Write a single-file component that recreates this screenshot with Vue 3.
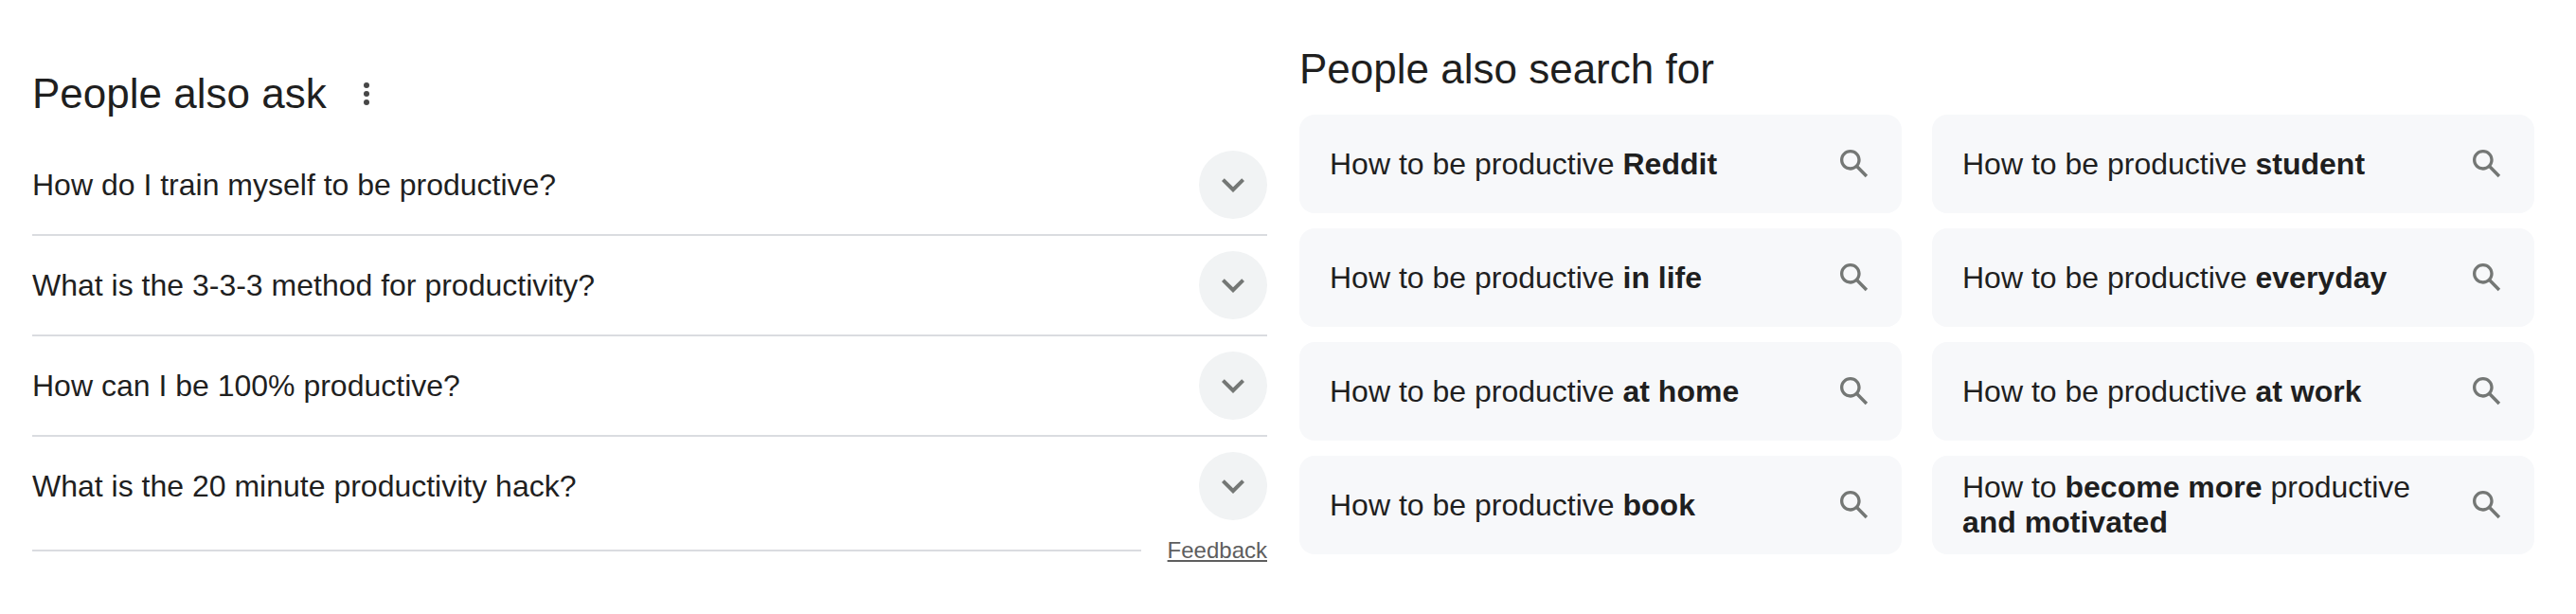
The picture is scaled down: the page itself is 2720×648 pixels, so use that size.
<script setup>
const questions = [
  'How do I train myself to be productive?',
  'What is the 3-3-3 method for productivity?',
  'How can I be 100% productive?',
  'What is the 20 minute productivity hack?',
]

const base = 'How to be productive '
const searches = [
  [{ t: base }, { t: 'Reddit', b: true }],
  [{ t: base }, { t: 'student', b: true }],
  [{ t: base }, { t: 'in life', b: true }],
  [{ t: base }, { t: 'everyday', b: true }],
  [{ t: base }, { t: 'at home', b: true }],
  [{ t: base }, { t: 'at work', b: true }],
  [{ t: base }, { t: 'book', b: true }],
  [{ t: 'How to ' }, { t: 'become more', b: true }, { t: ' productive ' }, { t: 'and motivated', b: true }],
]
</script>

<template>
  <main class="page">
    <section class="ask">
      <header class="ask-head">
        <h2 class="title">People also ask</h2>
        <svg class="dots" viewBox="0 0 24 24">
          <circle cx="12" cy="6" r="2" />
          <circle cx="12" cy="12" r="2" />
          <circle cx="12" cy="18" r="2" />
        </svg>
      </header>
      <ul class="questions">
        <li v-for="q in questions" :key="q" class="question">
          <span>{{ q }}</span>
          <span class="toggle">
            <svg viewBox="0 0 24 24"><path d="M16.59 8.59L12 13.17 7.41 8.59 6 10l6 6 6-6z" /></svg>
          </span>
        </li>
      </ul>
      <footer class="ask-foot">
        <span class="rule"></span>
        <a class="feedback">Feedback</a>
      </footer>
    </section>

    <section class="related">
      <h2 class="title">People also search for</h2>
      <div class="cards">
        <a v-for="(s, i) in searches" :key="i" class="card">
          <span class="label"><template v-for="(p, j) in s" :key="j"><b v-if="p.b">{{ p.t }}</b><template v-else>{{ p.t }}</template></template></span>
          <svg class="glass" viewBox="0 0 24 24">
            <path d="M20.49 19l-5.73-5.73C15.53 12.2 16 10.91 16 9.5 16 5.91 13.09 3 9.5 3S3 5.91 3 9.5 5.91 16 9.5 16c1.41 0 2.7-.47 3.77-1.24L19 20.49 20.49 19zM5 9.5C5 7.01 7.01 5 9.5 5S14 7.01 14 9.5 11.99 14 9.5 14 5 11.99 5 9.5z" />
          </svg>
        </a>
      </div>
    </section>
  </main>
</template>

<style>
body {
  background: #fff;
}
</style>

<style scoped>
.page {
  box-sizing: border-box;
  width: 2720px;
  height: 648px;
  padding: 0 44px 0 34px;
  display: flex;
  gap: 34px;
  overflow: hidden;
  background: #fff;
  color: #1f1f1f;
  font-family: "Liberation Sans", Arial, sans-serif;
  font-size: 32px;
  line-height: 37px;
}
.ask {
  width: 1304px;
  padding-top: 73px;
}
.title {
  margin: 0;
  font-size: 44px;
  font-weight: 400;
  line-height: 51px;
  white-space: nowrap;
}
.ask-head {
  display: flex;
  align-items: flex-start;
  height: 52px;
  margin-bottom: 18px;
}
.dots {
  width: 36px;
  height: 36px;
  margin: 8px 0 0 24px;
  fill: #474747;
}
.questions {
  list-style: none;
  margin: 0;
  padding: 0;
}
.question {
  box-sizing: border-box;
  height: 106px;
  display: flex;
  align-items: center;
  justify-content: space-between;
  border-bottom: 2px solid #dadce0;
}
.question:last-child {
  border-bottom-color: transparent;
}
.toggle {
  width: 72px;
  height: 72px;
  border-radius: 50%;
  background: #f1f3f4;
  display: flex;
  align-items: center;
  justify-content: center;
}
.toggle svg {
  width: 48px;
  height: 48px;
  fill: #747775;
}
.ask-foot {
  display: flex;
  align-items: center;
  gap: 28px;
}
.rule {
  flex: 1;
  height: 2px;
  background: #dadce0;
}
.feedback {
  margin-bottom: 1px;
  font-size: 24px;
  line-height: 27px;
  color: #5e5e5e;
  text-decoration: underline;
  text-decoration-thickness: 2px;
  text-underline-offset: 2px;
}
.related {
  width: 1304px;
  padding-top: 47px;
}
.cards {
  display: grid;
  grid-template-columns: 636px 636px;
  grid-auto-rows: 104px;
  gap: 16px 32px;
  margin-top: 23px;
}
.card {
  box-sizing: border-box;
  padding: 0 30px 0 32px;
  display: flex;
  align-items: center;
  justify-content: space-between;
  border-radius: 16px;
  background: #f7f8fa;
}
.label {
  max-width: 500px;
}
.glass {
  width: 40px;
  height: 40px;
  fill: #747775;
}
</style>
